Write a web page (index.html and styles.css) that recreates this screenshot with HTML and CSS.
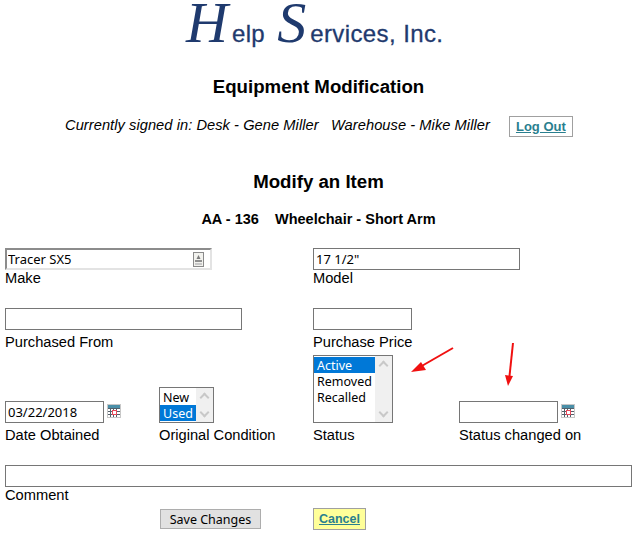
FILE: index.html
```html
<!DOCTYPE html>
<html lang="en">
<head>
  <meta charset="UTF-8">
  <title>Equipment Modification</title>
  <link rel="stylesheet" href="styles.css">
</head>
<body>
  <div class="logo"><span class="logo-cap logo-cap-h">H</span>elp <span class="logo-cap logo-cap-s">S</span>ervices, Inc.</div>
  <h1 class="page-title">Equipment Modification</h1>
  <div class="signed-in">
    <span class="signed-text">Currently signed in: Desk - Gene Miller &nbsp; Warehouse - Mike Miller</span>
    <a class="link-btn logout" href="#">Log Out</a>
  </div>
  <h2 class="sub-title">Modify an Item</h2>
  <div class="item-name">AA - 136 &nbsp;&nbsp; Wheelchair - Short Arm</div>

  <form class="form-grid">
    <div class="field span-2 row-make">
      <div class="autofill-wrap">
        <input class="text-input input-make" type="text" value="Tracer SX5">
        <svg class="key-icon" width="11" height="15" viewBox="0 0 11 15">
          <rect x="0.5" y="0.5" width="10" height="14" fill="#f2f2ee" stroke="#8a8a8a"/>
          <rect x="2" y="8" width="7" height="2" fill="#8f8f8f"/>
          <rect x="2" y="11" width="7" height="2" fill="#c8c8c8"/>
          <path d="M5.500 3 L7.500 7 H3.500 Z" fill="#7a7a7a"/>
        </svg>
      </div>
      <label class="field-label">Make</label>
    </div>
    <div class="field span-2 row-make">
      <input class="text-input input-model" type="text" value="17 1/2&quot;">
      <label class="field-label">Model</label>
    </div>

    <div class="field span-2 row-purchase">
      <input class="text-input input-from" type="text">
      <label class="field-label label-far">Purchased From</label>
    </div>
    <div class="field span-2 row-purchase">
      <input class="text-input input-short" type="text">
      <label class="field-label label-far">Purchase Price</label>
    </div>

    <div class="field row-status">
      <div class="date-wrap">
        <input class="text-input input-short" type="text" value="03/22/2018">
        <svg class="cal-icon" width="14" height="14" viewBox="0 0 14 14">
          <rect width="14" height="14" fill="#c8c8c8"/>
          <rect x="1" y="1" width="12" height="3" fill="#4a8fa8"/>
          <rect x="1" y="4" width="12" height="9" fill="#fff"/>
          <path d="M1 4.500H13M1 7.500H13M1 10.500H13M3.500 4V13M6.500 4V13M9.500 4V13" stroke="#55606a" stroke-width="1"/>
          <rect x="5.500" y="6.500" width="4" height="4" fill="#fff" stroke="#e8485a"/>
        </svg>
      </div>
      <label class="field-label label-far">Date Obtained</label>
    </div>
    <div class="field row-status">
      <div class="listbox listbox-condition">
        <div class="list-options">
          <div class="list-option">New</div>
          <div class="list-option selected">Used</div>
        </div>
        <div class="list-scroll">
          <span class="chev chev-up"></span>
          <span class="chev chev-down"></span>
        </div>
      </div>
      <label class="field-label label-far">Original Condition</label>
    </div>
    <div class="field row-status">
      <div class="listbox listbox-status">
        <div class="list-options">
          <div class="list-option selected">Active</div>
          <div class="list-option">Removed</div>
          <div class="list-option">Recalled</div>
        </div>
        <div class="list-scroll">
          <span class="chev chev-up"></span>
          <span class="chev chev-down"></span>
        </div>
      </div>
      <label class="field-label label-far">Status</label>
    </div>
    <div class="field row-status">
      <div class="date-wrap">
        <input class="text-input input-short" type="text">
        <svg class="cal-icon" width="14" height="14" viewBox="0 0 14 14">
          <rect width="14" height="14" fill="#c8c8c8"/>
          <rect x="1" y="1" width="12" height="3" fill="#4a8fa8"/>
          <rect x="1" y="4" width="12" height="9" fill="#fff"/>
          <path d="M1 4.500H13M1 7.500H13M1 10.500H13M3.500 4V13M6.500 4V13M9.500 4V13" stroke="#55606a" stroke-width="1"/>
          <rect x="5.500" y="6.500" width="4" height="4" fill="#fff" stroke="#e8485a"/>
        </svg>
      </div>
      <label class="field-label label-far">Status changed on</label>
    </div>

    <div class="field span-4 row-comment">
      <input class="text-input input-comment" type="text">
      <label class="field-label">Comment</label>
    </div>

    <div class="actions-save span-2">
      <button class="save-btn" type="button">Save Changes</button>
    </div>
    <div class="actions-cancel span-2">
      <a class="link-btn cancel" href="#">Cancel</a>
    </div>
  </form>

  <!-- annotation arrows drawn on top of the screenshot -->
  <svg class="arrows" width="643" height="535" viewBox="0 0 643 535">
    <path d="M453 348 L420 367" stroke="#f01010" stroke-width="2" fill="none"/>
    <path d="M411 372 L421 362 L426 370 Z" fill="#f01010"/>
    <path d="M513 343 L509.500 376" stroke="#f01010" stroke-width="2" fill="none"/>
    <path d="M508 386 L505 375 L513 376 Z" fill="#f01010"/>
  </svg>
</body>
</html>
```

FILE: styles.css
```css
html, body {
  height: 100%;
}
body {
  margin: 0;
  padding: 0 11px 0 5px;
  background: #fff;
  color: #000;
  font-family: "Liberation Sans", Arial, sans-serif;
  font-size: 14.67px;
  position: relative;
  overflow: hidden;
}
.logo {
  height: 60px;
  padding: 3px 0 0 181px;
  color: #1f3a6e;
  font-size: 24px;
  line-height: 60px;
  white-space: nowrap;
  letter-spacing: 0.4px;
  box-sizing: border-box;
  -webkit-text-stroke: 0.3px #1f3a6e;
}
.logo-cap {
  font-family: "Liberation Serif", serif;
  font-style: italic;
  font-size: 58px;
  line-height: 40px;
  letter-spacing: 0;
  -webkit-text-stroke: 0;
}
.logo-cap-h {
  margin-right: 4px;
}
.logo-cap-s {
  margin: 0 4px 0 5px;
}
.page-title {
  margin: 14px 0 0;
  text-align: center;
  font-size: 18.67px;
  line-height: 26px;
  font-weight: bold;
}
.signed-in {
  display: flex;
  align-items: center;
  margin-top: 15px;
  padding-left: 60px;
  height: 22px;
}
.signed-text {
  font-style: italic;
  white-space: nowrap;
  margin-top: -2px;
  letter-spacing: 0.05px;
}
.link-btn {
  display: inline-block;
  box-sizing: border-box;
  border: 1px solid #a0a0a0;
  color: #2a7f8f;
  font-weight: bold;
  font-size: 13px;
  text-align: center;
}
.logout {
  width: 64px;
  height: 21px;
  line-height: 19px;
  margin-left: 19px;
}
.sub-title {
  margin: 32px 0 0;
  text-align: center;
  font-size: 18.67px;
  line-height: 26px;
  font-weight: bold;
}
.item-name {
  margin-top: 15px;
  text-align: center;
  font-size: 14.5px;
  line-height: 18px;
  font-weight: bold;
}
.form-grid {
  display: grid;
  grid-template-columns: 154px 154px 146px 173px;
  margin-top: 20px;
  align-items: end;
}
.span-2 {
  grid-column: span 2;
}
.span-4 {
  grid-column: span 4;
}
.field {
  display: flex;
  flex-direction: column;
  align-items: flex-start;
}
.field-label {
  line-height: 17px;
}
.label-far {
  margin-top: 4px;
}
.row-purchase {
  margin-top: 21px;
}
.row-status {
  margin-top: 4px;
}
.row-comment {
  margin-top: 21px;
}
.text-input {
  box-sizing: border-box;
  height: 22px;
  margin: 0;
  padding: 1px 2px;
  border: 1px solid #767676;
  border-radius: 0;
  background: #fff;
  color: #000;
  font-family: "Noto Sans", sans-serif;
  font-size: 13px;
  outline: none;
}
.autofill-wrap {
  position: relative;
}
.input-make {
  display: block;
  width: 207px;
  border-width: 2px;
  border-color: #8c8c8c #e3e3e3 #e3e3e3 #8c8c8c;
  padding: 0 1px;
}
.key-icon {
  position: absolute;
  top: 4px;
  right: 8px;
}
.input-model {
  width: 207px;
}
.input-from {
  width: 237px;
}
.input-short {
  width: 99px;
}
.input-comment {
  width: 627px;
}
.date-wrap {
  display: flex;
  align-items: center;
  gap: 3px;
}
.cal-icon {
  margin-top: -2px;
}
.listbox {
  box-sizing: border-box;
  display: flex;
  border: 1px solid #767676;
  font-family: "Noto Sans", sans-serif;
  font-size: 12.5px;
  line-height: 18px;
}
.listbox-condition {
  width: 55px;
  height: 36px;
}
.listbox-status {
  width: 80px;
  height: 68px;
}
.list-options {
  flex: 1;
  padding-top: 1px;
}
.list-option {
  padding-left: 3px;
  height: 16px;
}
.list-option.selected {
  background: #0078d7;
  color: #fff;
}
.list-scroll {
  width: 17px;
  display: flex;
  flex-direction: column;
  justify-content: space-between;
  align-items: center;
  padding: 6px 0;
  box-sizing: border-box;
  background: #f0f0f0;
}
.chev {
  display: block;
  width: 5px;
  height: 5px;
  border-left: 2px solid #c8c8c8;
  border-top: 2px solid #c8c8c8;
}
.chev-up {
  transform: rotate(45deg);
}
.chev-down {
  transform: rotate(225deg);
}
.actions-save {
  margin-top: 4px;
  padding-left: 155px;
  align-self: center;
}
.actions-cancel {
  margin-top: 4px;
  align-self: center;
}
.save-btn {
  display: block;
  box-sizing: border-box;
  width: 101px;
  height: 20px;
  padding: 0;
  border: 1px solid #adadad;
  background: #e1e1e1;
  color: #000;
  font-family: "Noto Sans", sans-serif;
  font-size: 12.5px;
}
.cancel {
  width: 53px;
  height: 22px;
  line-height: 21px;
  font-size: 12.5px;
  background: #ffff99;
}
.arrows {
  position: absolute;
  top: 0;
  left: 0;
}
```
